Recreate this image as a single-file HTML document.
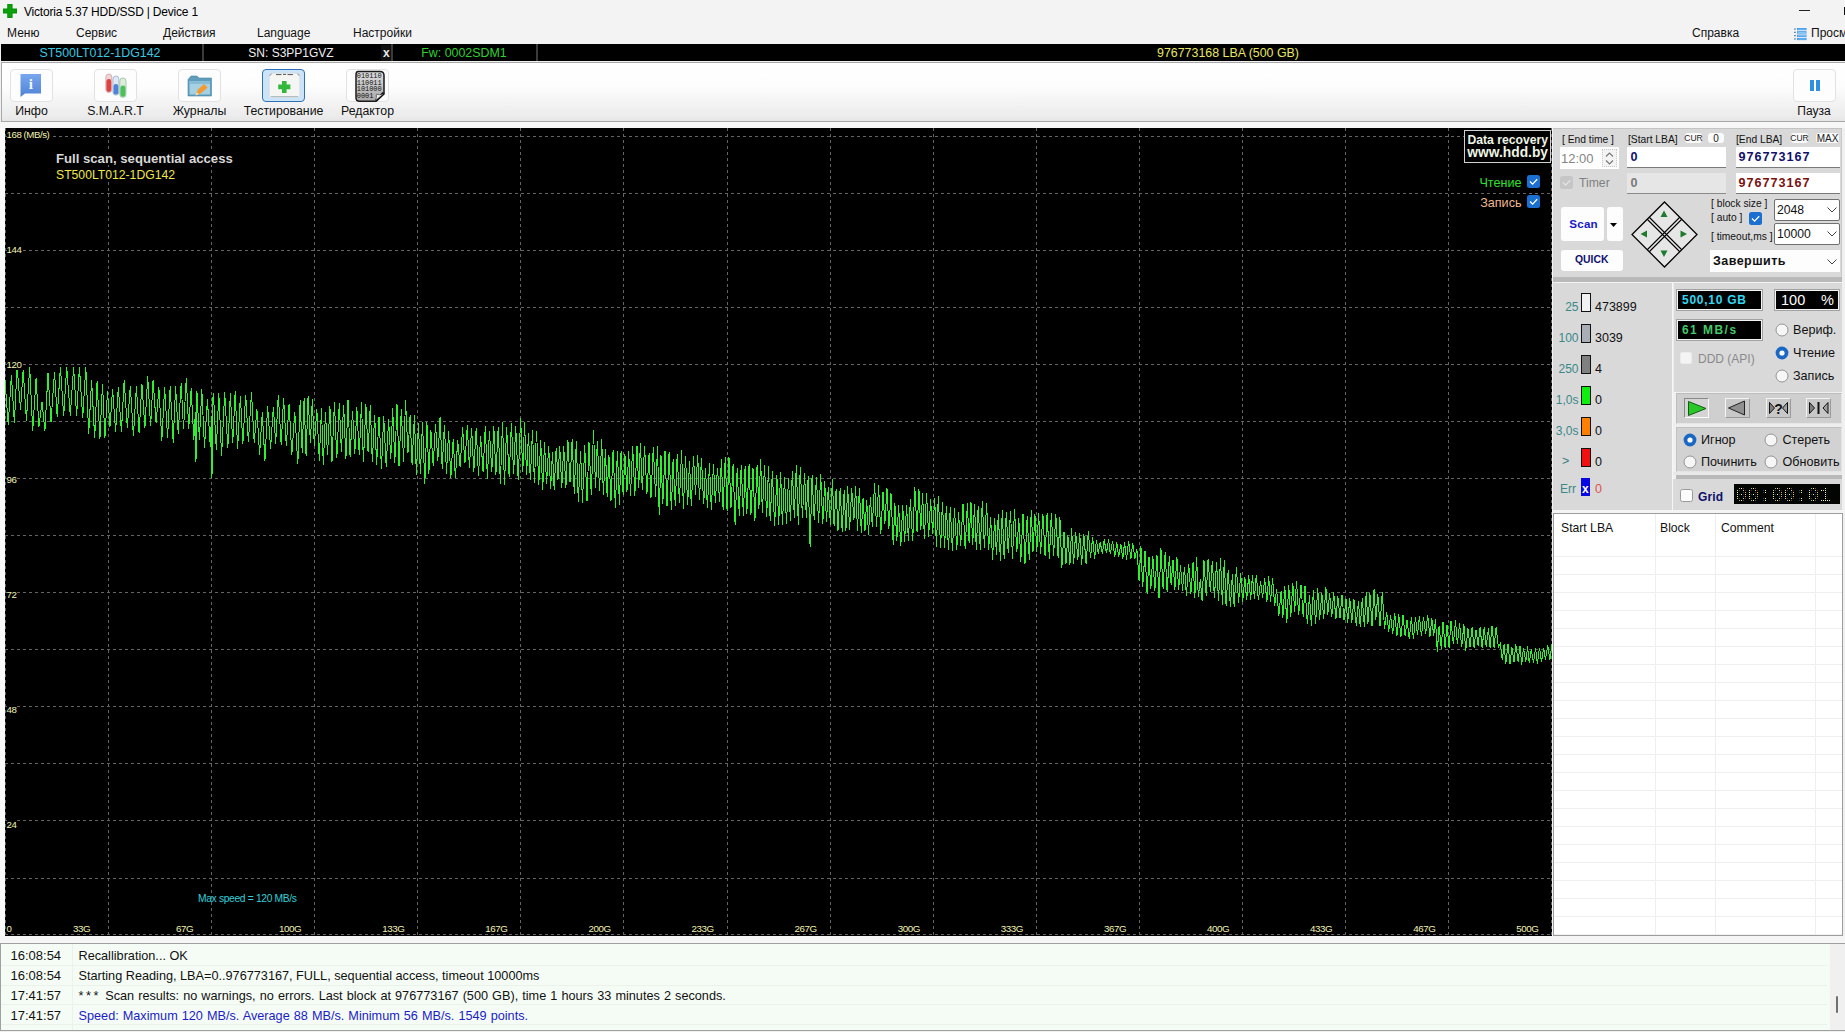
<!DOCTYPE html><html><head><meta charset="utf-8"><title>Victoria 5.37 HDD/SSD | Device 1</title><style>
*{box-sizing:border-box;margin:0;padding:0}
html,body{width:1845px;height:1032px;overflow:hidden;background:#f0f0f0}
body{position:relative;font-family:"Liberation Sans","DejaVu Sans",sans-serif;font-size:12px;color:#000}
.a{position:absolute;white-space:nowrap}
.t{position:absolute;white-space:nowrap;line-height:1}
.b{font-weight:bold}
</style></head><body>
<div class="a" style="left:0px;top:0px;width:1845px;height:22px;background:#f3f3f3"></div>
<svg class="a" style="left:3px;top:4px" width="14" height="14" viewBox="0 0 14 14"><path d="M4.2 0h5.4v4.6h4.4v5h-4.4v4.4h-5.4v-4.4h-4.2v-5h4.2z" fill="#0b940b"/><path d="M5.5 1.5h2.8v4.4h4.2v2h-4.2v4.6h-2.8v-4.6h-4v-2h4z" fill="#0aa40a"/></svg>
<div class="t" style="left:24px;top:6px;font-size:12px;color:#000;letter-spacing:-0.2px">Victoria 5.37 HDD/SSD | Device 1</div>
<div class="a" style="left:1799px;top:10px;width:10.5px;height:1px;background:#222"></div>
<div class="a" style="left:1843.5px;top:6.5px;width:2px;height:8.5px;background:#111"></div>
<div class="a" style="left:0px;top:22px;width:1845px;height:22px;background:#f3f3f3"></div>
<div class="t" style="left:7px;top:26.6px;font-size:12px;color:#111;">Меню</div>
<div class="t" style="left:76px;top:26.6px;font-size:12px;color:#111;">Сервис</div>
<div class="t" style="left:163px;top:26.6px;font-size:12px;color:#111;">Действия</div>
<div class="t" style="left:257px;top:26.6px;font-size:12px;color:#111;">Language</div>
<div class="t" style="left:353px;top:26.6px;font-size:12px;color:#111;">Настройки</div>
<div class="t" style="left:1692px;top:26.6px;font-size:12px;color:#111;">Справка</div>
<div class="t" style="left:1811px;top:26.6px;font-size:12px;color:#111;">Просм</div>
<svg class="a" style="left:1794px;top:27px" width="13" height="14" viewBox="0 0 13 14"><g fill="#2f8ee6"><rect x="3" y="1" width="9.5" height="2.2"/><rect x="3" y="4.3" width="9.5" height="2.2"/><rect x="3" y="7.6" width="9.5" height="2.2"/><rect x="3" y="10.9" width="9.5" height="2.2"/></g><g fill="#9ad4ff"><rect x="3.6" y="1.7" width="8.3" height="0.8"/><rect x="3.6" y="5" width="8.3" height="0.8"/><rect x="3.6" y="8.3" width="8.3" height="0.8"/><rect x="3.6" y="11.6" width="8.3" height="0.8"/></g><g fill="#2a5a9a"><rect x="0.3" y="1.4" width="1.3" height="1.3"/><rect x="0.3" y="4.7" width="1.3" height="1.3"/><rect x="0.3" y="8" width="1.3" height="1.3"/><rect x="0.3" y="11.3" width="1.3" height="1.3"/></g></svg>
<div class="a" style="left:1px;top:44px;width:1844px;height:17px;background:#000"></div>
<div class="a" style="left:202px;top:44px;width:2px;height:17px;background:#3a3a3a"></div>
<div class="a" style="left:391px;top:44px;width:2px;height:17px;background:#3a3a3a"></div>
<div class="a" style="left:536px;top:44px;width:2px;height:17px;background:#3a3a3a"></div>
<div class="a" style="left:381px;top:45px;width:10px;height:16px;background:#101010"></div>
<div class="t" style="left:-50px;width:300px;text-align:center;top:47px;font-size:12.4px;color:#38c8e0;">ST500LT012-1DG142</div>
<div class="t" style="left:141px;width:300px;text-align:center;top:47px;font-size:12px;color:#f0f0f0;">SN: S3PP1GVZ</div>
<div class="t b" style="left:383px;top:47px;font-size:12px;color:#e8e8e8;">x</div>
<div class="t" style="left:314px;width:300px;text-align:center;top:47px;font-size:12.4px;color:#30d030;">Fw: 0002SDM1</div>
<div class="t" style="left:1078px;width:300px;text-align:center;top:47px;font-size:12.4px;color:#e8e860;">976773168 LBA (500 GB)</div>
<div class="a" style="left:1px;top:62px;width:1844px;height:60px;background:linear-gradient(#ffffff,#fdfdfd 40%,#ececec 90%,#e6e6e6);border:1px solid #a8a8a8;border-right:none"></div>
<div class="a" style="left:0px;top:122px;width:1845px;height:6px;background:#f7f7f7"></div>
<div class="a" style="left:0px;top:128px;width:5px;height:808px;background:#fafafa"></div>
<div class="a" style="left:10px;top:69px;width:43px;height:33px;background:#fdfdfd;border:1px solid #e2e2e2;border-radius:4px"></div>
<div class="t" style="left:-118.5px;width:300px;text-align:center;top:105px;font-size:12.3px;color:#111;">Инфо</div>
<div class="a" style="left:94px;top:69px;width:43px;height:33px;background:#fdfdfd;border:1px solid #e2e2e2;border-radius:4px"></div>
<div class="t" style="left:-34.5px;width:300px;text-align:center;top:105px;font-size:12.3px;color:#111;">S.M.A.R.T</div>
<div class="a" style="left:178px;top:69px;width:43px;height:33px;background:#fdfdfd;border:1px solid #e2e2e2;border-radius:4px"></div>
<div class="t" style="left:49.5px;width:300px;text-align:center;top:105px;font-size:12.3px;color:#111;">Журналы</div>
<div class="a" style="left:262px;top:69px;width:43px;height:33px;background:#cce4f7;border:1px solid #2f70b4;border-radius:4px"></div>
<div class="t" style="left:133.5px;width:300px;text-align:center;top:105px;font-size:12.3px;color:#111;">Тестирование</div>
<div class="a" style="left:346px;top:69px;width:43px;height:33px;background:#fdfdfd;border:1px solid #e2e2e2;border-radius:4px"></div>
<div class="t" style="left:217.5px;width:300px;text-align:center;top:105px;font-size:12.3px;color:#111;">Редактор</div>
<svg class="a" style="left:20px;top:73px" width="22" height="25" viewBox="0 0 22 25"><defs><linearGradient id="gi" x1="0" y1="0" x2="0" y2="1"><stop offset="0" stop-color="#78a6ee"/><stop offset="1" stop-color="#4f82d6"/></linearGradient></defs><path d="M0.5 1h20.5v19.5h-16l-4.5 3.5z" fill="url(#gi)"/><text x="10.8" y="16" font-family="Liberation Serif,serif" font-weight="bold" font-size="15" text-anchor="middle" fill="#f4f8ff">i</text></svg>
<svg class="a" style="left:104px;top:73px" width="24" height="26" viewBox="0 0 24 26"><rect x="1.8" y="1" width="6" height="18.6" rx="3" fill="#f2d4d4" stroke="#c09090" stroke-width="0.6"/><rect x="2.4" y="6" width="4.8" height="13" rx="2.4" fill="#dc4444"/><rect x="8.9" y="3" width="6" height="19.2" rx="3" fill="#dde8f8" stroke="#8898b8" stroke-width="0.6"/><rect x="9.5" y="11" width="4.8" height="10.6" rx="2.4" fill="#4c84dc"/><rect x="15.8" y="5" width="6.2" height="19.4" rx="3" fill="#d8f0d8" stroke="#88a888" stroke-width="0.6"/><rect x="16.4" y="12.5" width="5" height="11.3" rx="2.4" fill="#4cc05a"/></svg>
<svg class="a" style="left:187px;top:75px" width="26" height="22" viewBox="0 0 26 22"><path d="M1 4.5l3-3.5h6l2 2h12.5v18h-23.5z" fill="#5f9dbb" stroke="#4a86a6" stroke-width="0.6"/><rect x="2.5" y="6" width="20.5" height="13.5" fill="#a6d0e4"/><rect x="2.5" y="6" width="20.5" height="3" fill="#86bcd6"/><path d="M8.5 20.5l2.5-6 6-5.5 3.6 3.4-6.3 5.6z" fill="#f49a30"/><path d="M8.5 20.5l1.3-3.2 2 2z" fill="#fbe4b8"/></svg>
<svg class="a" style="left:268px;top:71px" width="33" height="28" viewBox="0 0 33 28"><rect x="1.2" y="2.2" width="30.6" height="24.2" rx="2.5" fill="#f5f5f3" stroke="#d4dce4" stroke-width="0.8"/><path d="M8 3.6h5.5M15 3.4h3M19.5 3.6h5.5" stroke="#555" stroke-width="1"/><path d="M1.6 4.8l2-2.2M31.4 4.8l-2-2.2" stroke="#667" stroke-width="0.8"/><path d="M14 10h4.6v3.6h3.8v4.6h-3.8v3.8h-4.6v-3.8h-3.8v-4.6h3.8z" fill="#34b83c"/><path d="M3 25.6h27" stroke="#9aa" stroke-width="0.8"/></svg>
<svg class="a" style="left:354px;top:70px" width="32" height="33" viewBox="0 0 32 33"><defs><linearGradient id="ge" x1="0" y1="0" x2="0" y2="1"><stop offset="0" stop-color="#dedede"/><stop offset="1" stop-color="#a8a8a8"/></linearGradient></defs><path d="M4 1.5h22q4 0 4 4v18.5l-8 7.2h-16.5q-3.5 0-3.500 -3.500v-22.700q0 -3.500 2 -3.500z" fill="url(#ge)" stroke="#1a1a1a" stroke-width="1.5"/><path d="M29.6 23l-7.600 7.600" stroke="#111" stroke-width="2.6"/><path d="M21.500 30.500q1.500 -3 0.800 -6.200q3.500 1 7 -0.300z" fill="#efefef" stroke="#333" stroke-width="0.6"/><g font-family="Liberation Mono,monospace" font-size="6.900" fill="#111"><text x="2.800" y="8.200">010110</text><text x="2.800" y="14.800">110011</text><text x="2.800" y="21.200">101000</text><text x="2.800" y="27.500">0001</text></g></svg>
<div class="a" style="left:1793px;top:69px;width:43px;height:33px;background:#fdfdfd;border:1px solid #e2e2e2;border-radius:4px"></div>
<div class="a" style="left:1810px;top:80px;width:4px;height:11px;background:#2f8fe0"></div>
<div class="a" style="left:1816px;top:80px;width:4px;height:11px;background:#2f8fe0"></div>
<div class="t" style="left:1664px;width:300px;text-align:center;top:105px;font-size:12px;color:#111;">Пауза</div>
<svg class="a" style="left:5px;top:128px" width="1547" height="808" viewBox="5 128 1547 808"><rect x="5" y="128" width="1547" height="808" fill="#000"/><g stroke="#646464" stroke-width="1" stroke-dasharray="3 3" shape-rendering="crispEdges"><path d="M5.5 128V936"/><path d="M108.5 128V936"/><path d="M211.5 128V936"/><path d="M314.5 128V936"/><path d="M417.5 128V936"/><path d="M520.5 128V936"/><path d="M623.5 128V936"/><path d="M727.5 128V936"/><path d="M830.5 128V936"/><path d="M933.5 128V936"/><path d="M1036.5 128V936"/><path d="M1139.5 128V936"/><path d="M1242.5 128V936"/><path d="M1345.5 128V936"/><path d="M1448.5 128V936"/><path d="M1551.5 128V936"/><path d="M5 136.5H1552"/><path d="M5 193.5H1552"/><path d="M5 250.5H1552"/><path d="M5 307.5H1552"/><path d="M5 364.5H1552"/><path d="M5 421.5H1552"/><path d="M5 478.5H1552"/><path d="M5 535.5H1552"/><path d="M5 592.5H1552"/><path d="M5 649.5H1552"/><path d="M5 706.5H1552"/><path d="M5 763.5H1552"/><path d="M5 820.5H1552"/><path d="M5 878.5H1552"/><path d="M5 934.5H1552"/></g><polyline fill="none" stroke="#2ff02f" stroke-width="1" shape-rendering="crispEdges" points="5.0,380.2 8.2,424.7 11.4,375.4 14.4,422.8 17.1,367.0 20.5,409.5 23.2,369.6 26.4,420.5 29.7,367.0 32.7,430.8 36.1,378.1 38.9,426.8 42.0,402.0 44.9,430.7 48.0,373.2 51.0,422.1 54.5,371.7 57.2,416.9 60.4,367.0 63.7,415.6 66.7,367.0 70.3,415.7 73.6,367.0 76.6,415.6 79.4,367.0 82.7,417.8 85.8,367.0 88.7,434.3 91.6,379.9 94.7,438.2 97.1,381.4 99.9,439.1 102.5,383.6 104.9,438.2 107.5,391.3 110.0,426.8 112.6,389.0 115.6,431.6 118.3,386.9 121.4,431.9 124.2,380.2 127.3,427.9 130.3,385.6 133.4,435.8 136.4,386.4 139.1,433.2 141.9,383.6 144.9,428.1 147.7,376.3 150.6,426.4 153.1,379.6 156.1,423.3 158.9,387.5 161.8,440.7 164.6,387.4 167.6,437.5 170.2,386.0 173.2,442.7 175.6,386.1 178.2,433.8 181.2,383.0 183.5,429.3 186.3,377.8 188.7,428.7 191.2,388.3 193.8,439.9 195.4,412.4 196,462 196.6,398.0 196.9,391.1 199.4,439.5 201.8,389.4 204.5,447.6 207.4,399.5 210.3,446.5 211.4,416.1 212,478 212.6,401.4 213.4,393.0 216.3,449.9 218.8,393.3 221.6,455.6 224.7,392.4 227.8,448.4 230.4,393.2 232.7,443.2 235.2,391.3 237.6,448.6 240.4,395.8 242.8,444.2 245.7,394.9 248.4,442.4 251.5,392.1 254.2,442.9 256.9,408.8 259.6,454.9 262.3,412.2 264.9,461.3 267.6,406.4 270.6,448.7 273.4,406.7 275.7,443.5 278.3,394.8 281.2,444.7 283.6,398.0 286.3,445.7 289.1,403.7 291.8,454.6 294.8,412.1 297.8,464.3 300.2,400.5 302.2,452.6 304.1,398.2 306.1,456.4 308.1,395.7 310.4,443.1 312.3,399.0 314.3,446.4 316.8,409.1 319.3,460.5 321.5,408.1 323.3,465.3 325.5,411.9 327.5,455.4 329.9,405.8 332.0,462.1 334.4,402.0 336.8,458.4 339.3,403.0 341.4,452.4 343.6,404.7 345.9,459.4 348.0,400.0 350.1,457.2 352.5,410.6 354.8,453.6 356.8,407.3 359.3,455.1 361.5,402.5 363.4,461.8 365.9,404.5 368.1,452.4 370.3,405.0 372.3,462.2 374.7,415.1 376.6,464.8 379.0,416.6 381.5,468.9 383.7,416.1 386.2,466.8 388.6,419.3 390.8,459.0 392.7,408.4 394.8,462.6 397.0,404.2 399.0,466.4 401.3,409.3 403.6,461.6 405.5,399.7 408.0,452.5 410.1,415.4 412.1,465.1 414.4,415.3 416.4,475.4 418.4,423.3 420.4,473.7 422.5,422.3 424.8,484.3 426.9,421.9 428.8,474.0 430.9,430.4 433.2,466.3 435.5,423.9 437.8,460.9 440.1,416.9 442.2,468.7 444.4,424.8 446.5,473.7 448.6,431.0 450.8,478.3 453.2,439.1 455.4,478.0 457.7,440.5 460.1,467.1 462.6,427.4 464.9,463.4 467.3,425.5 469.4,468.1 471.6,427.6 473.8,471.5 476.2,427.9 478.5,475.9 480.6,436.3 483.1,472.0 485.3,426.4 487.4,478.5 489.4,430.6 491.8,471.7 493.8,426.0 495.9,474.7 498.2,427.5 500.4,483.9 502.5,422.0 504.5,485.3 506.6,426.9 509.2,477.3 511.4,422.6 513.6,474.2 515.7,426.4 518.2,479.8 520.6,418.1 522.8,472.1 524.5,422.5 526.6,475.0 528.5,432.6 530.3,480.3 532.5,430.3 534.4,483.0 536.5,430.7 538.8,484.6 540.7,440.0 542.7,490.2 544.5,442.4 546.6,484.1 548.7,445.9 550.6,488.7 552.5,452.2 554.2,490.0 556.2,447.8 558.0,479.6 559.7,445.6 561.8,487.5 563.7,445.9 565.9,488.0 567.9,440.0 570.0,482.2 572.2,438.8 574.3,494.0 576.3,440.9 578.3,502.4 580.6,451.3 582.5,502.9 584.7,444.9 587.0,501.3 589.0,442.3 591.3,495.4 593.5,430.2 595.6,488.3 597.3,440.6 599.6,490.7 601.7,439.0 603.4,494.9 605.4,449.1 607.2,497.2 608.9,454.8 611.0,500.6 613.1,450.3 615.4,507.8 617.4,450.6 619.4,504.6 621.1,450.6 623.2,495.4 624.9,453.9 626.9,492.2 628.7,451.3 630.5,495.7 632.7,445.9 634.8,496.3 637.0,445.7 638.7,488.4 640.4,442.8 642.3,489.6 644.6,446.4 646.9,493.7 649.1,453.3 651.0,497.7 653.3,446.9 655.6,496.8 657.5,445.7 659.2,514.8 661.0,455.4 662.8,504.1 665.0,450.8 667.0,506.2 669.1,451.8 671.4,510.4 673.1,459.4 675.3,506.0 677.2,454.0 679.4,503.0 681.6,450.1 683.4,508.6 685.5,456.1 687.7,505.1 689.5,461.1 691.3,506.0 693.5,455.6 695.5,495.0 697.7,454.8 699.5,500.4 701.4,458.1 703.7,504.4 705.5,468.1 707.4,508.1 709.5,463.3 711.3,509.8 713.5,463.7 715.3,502.7 717.5,467.7 719.6,502.4 721.4,459.4 723.1,509.5 725.3,456.7 727.1,511.3 729.0,457.3 731.0,507.6 733.1,464.0 735.1,524.9 737.2,468.4 739.3,515.6 741.2,465.0 743.4,516.2 745.1,466.4 746.8,513.9 749.1,463.9 750.9,515.4 753.0,468.5 754.9,521.1 757.1,465.3 758.9,508.6 760.6,458.7 762.4,513.2 764.5,465.0 766.7,517.0 768.5,465.8 770.2,521.3 772.4,470.8 774.6,526.4 776.9,475.3 778.7,524.8 780.6,471.7 782.4,525.3 784.5,476.9 786.5,524.3 788.5,478.1 790.4,520.5 792.4,470.7 794.3,517.5 796.3,465.2 798.3,525.0 800.3,466.7 802.4,518.1 804.6,472.9 806.3,517.9 808.2,476.1 810.1,547.2 812.1,474.9 814.2,520.2 816.4,477.0 818.6,522.8 820.7,474.1 822.8,524.3 824.7,481.1 826.5,521.9 828.3,486.8 830.4,524.5 832.4,478.9 834.1,526.0 836.1,489.3 838.0,530.7 840.2,487.9 842.2,531.6 844.2,490.2 845.9,530.7 847.7,486.4 849.6,530.3 851.7,488.0 853.9,520.2 855.6,486.2 857.5,531.0 859.4,487.8 861.3,533.2 863.1,497.6 865.0,530.6 866.7,499.8 868.5,534.8 870.4,497.1 872.3,526.8 874.6,483.0 876.5,527.0 878.6,485.4 880.8,534.2 883.0,492.1 884.8,524.2 887.0,488.4 888.8,528.9 891.0,493.5 893.2,544.5 894.9,503.4 896.8,541.1 898.6,505.0 900.8,546.3 902.7,505.3 904.6,541.9 906.6,505.5 908.4,540.9 910.4,499.5 912.7,541.4 914.8,487.0 917.1,532.2 918.9,488.6 920.8,530.2 922.6,492.8 924.4,538.9 926.5,492.9 928.7,536.8 930.6,499.1 932.7,533.7 934.7,497.8 936.4,546.8 938.3,496.4 940.6,548.4 942.4,502.4 944.6,547.8 946.3,506.0 948.5,550.3 950.3,506.6 952.4,551.0 954.5,508.4 956.8,549.7 958.5,511.8 960.7,546.0 963.0,504.2 965.2,549.4 967.4,503.4 969.1,543.4 971.0,502.2 972.7,545.2 974.5,504.3 976.3,549.7 978.2,506.2 980.3,549.5 982.3,500.6 984.4,547.7 986.6,503.0 988.6,550.3 990.7,517.0 992.5,559.5 994.7,518.1 996.4,555.3 998.3,513.8 1000.4,560.5 1002.3,510.5 1004.2,559.2 1006.3,512.0 1008.2,552.7 1010.5,511.4 1012.5,558.7 1014.5,508.8 1016.8,552.4 1018.8,518.3 1020.8,561.5 1023.0,514.1 1025.0,563.8 1027.2,516.0 1029.3,559.8 1031.3,509.6 1033.0,551.6 1034.9,514.0 1036.8,552.0 1038.6,512.8 1040.6,553.8 1042.9,513.6 1045.1,556.4 1047.1,513.2 1049.4,559.4 1051.3,513.5 1053.6,556.3 1055.8,514.5 1058.1,558.0 1059.9,517.5 1061.8,568.3 1064.0,531.6 1066.0,563.5 1067.9,534.9 1069.9,565.2 1071.6,528.0 1073.6,564.0 1075.7,532.0 1077.8,559.8 1079.7,532.9 1081.6,564.5 1083.9,534.3 1086.1,564.4 1088.3,531.5 1090.5,557.5 1092.7,537.2 1094.6,558.9 1096.4,539.9 1098.3,553.6 1100.2,541.9 1102.4,554.3 1104.2,539.3 1106.4,553.4 1108.6,539.4 1110.3,554.1 1112.6,540.8 1114.8,556.8 1116.8,542.2 1118.7,557.4 1120.8,543.6 1122.8,558.9 1124.6,542.1 1126.5,560.1 1128.6,541.1 1130.9,558.6 1132.7,543.1 1134.9,558.5 1136.9,549.1 1139.1,580.8 1140.9,545.6 1142.7,587.3 1145.0,551.0 1147.1,593.7 1149.0,556.6 1150.8,589.4 1152.8,555.6 1154.8,591.1 1157.0,555.2 1159.0,598.4 1160.9,548.5 1163.1,588.5 1165.2,551.9 1167.1,591.8 1169.4,556.0 1171.1,584.6 1173.0,559.7 1174.8,589.9 1176.9,556.8 1178.6,590.1 1180.5,565.4 1182.5,590.7 1184.5,566.6 1186.4,596.0 1188.7,563.9 1190.9,594.2 1193.1,562.0 1194.8,598.2 1196.6,557.4 1198.3,597.3 1200.3,579.4 1202.1,600.8 1204.0,560.4 1206.2,595.6 1208.1,558.7 1210.3,591.8 1212.3,560.8 1214.4,597.5 1216.6,562.0 1218.5,601.0 1220.5,558.4 1222.4,604.8 1224.3,559.9 1226.1,606.3 1228.2,569.6 1230.4,607.2 1232.4,573.6 1234.2,607.3 1236.4,566.9 1238.6,602.6 1240.7,573.3 1242.6,602.3 1244.9,577.3 1246.6,600.4 1248.7,575.3 1250.7,600.0 1252.4,575.3 1254.4,598.7 1256.3,574.6 1258.4,600.2 1260.6,581.1 1262.6,598.1 1264.7,578.5 1266.9,601.9 1268.7,576.4 1270.5,601.5 1272.6,578.2 1274.7,605.5 1276.6,588.8 1278.8,616.3 1281.1,591.4 1282.9,617.5 1284.8,586.2 1286.8,622.8 1288.7,585.3 1290.8,616.7 1292.8,582.6 1294.7,611.8 1296.5,581.1 1298.7,615.4 1301.0,585.0 1303.2,616.6 1305.0,586.1 1307.3,624.2 1309.5,595.4 1311.4,626.2 1313.4,590.3 1315.6,623.7 1317.7,588.2 1319.6,619.8 1321.9,592.9 1323.6,619.3 1325.9,587.5 1327.8,614.7 1329.6,593.4 1331.8,617.0 1333.7,592.1 1335.9,619.3 1337.8,595.9 1340.0,617.7 1342.0,594.6 1344.0,619.8 1346.0,599.0 1347.7,622.7 1349.8,598.5 1351.8,622.5 1353.9,598.9 1356.2,625.5 1358.5,601.2 1360.2,626.6 1362.3,598.4 1364.4,626.8 1366.2,592.1 1367.9,623.6 1369.9,593.3 1372.0,626.1 1374.1,588.9 1375.8,620.1 1377.8,594.5 1380.0,626.4 1382.3,592.1 1384.5,628.6 1386.7,611.8 1388.7,632.4 1390.6,614.7 1392.7,633.9 1394.7,613.1 1396.9,635.9 1398.8,614.4 1400.9,637.3 1403.0,615.4 1405.2,636.4 1407.0,619.7 1409.3,639.3 1411.4,617.0 1413.4,639.1 1415.5,617.1 1417.5,635.3 1419.4,615.9 1421.4,636.2 1423.5,616.9 1425.7,634.0 1427.7,615.0 1429.9,637.1 1431.8,617.6 1433.7,636.3 1435.5,619.3 1437.3,651.9 1439.1,625.8 1441.3,648.5 1443.0,621.6 1445.1,647.9 1447.0,624.6 1449.1,647.9 1451.0,620.6 1453.3,644.3 1455.5,620.5 1457.4,644.2 1459.6,623.5 1461.7,647.4 1463.9,624.2 1465.7,651.2 1467.9,628.4 1470.0,647.3 1472.1,627.0 1474.1,648.0 1476.0,629.6 1478.1,645.5 1480.1,627.4 1482.2,648.3 1484.2,626.8 1486.2,647.0 1488.4,628.4 1490.1,647.5 1492.0,625.7 1494.1,647.9 1496.1,626.6 1498.3,647.0 1500.3,643.2 1502.3,659.9 1504.1,643.9 1505.8,664.2 1508.0,644.2 1510.0,664.4 1511.9,646.9 1514.0,662.0 1515.8,644.3 1518.1,661.7 1520.0,646.1 1521.7,665.1 1523.5,647.8 1525.8,662.2 1527.6,646.5 1529.3,663.4 1531.2,649.1 1533.5,662.6 1535.6,647.9 1537.4,664.0 1539.5,647.6 1541.5,662.1 1543.6,647.6 1545.5,659.5 1547.7,645.1 1549.9,659.7 1552.0,643.8"/></svg>
<div class="t" style="left:6.5px;top:129.7px;font-size:9.7px;color:#f2f2b4;letter-spacing:-0.45px;background:#000;padding-right:1px">168 (MB/s)</div>
<div class="t" style="left:6.5px;top:244.7px;font-size:9.7px;color:#f2f2b4;letter-spacing:-0.45px;background:#000;padding-right:1px">144</div>
<div class="t" style="left:6.5px;top:359.8px;font-size:9.7px;color:#f2f2b4;letter-spacing:-0.45px;background:#000;padding-right:1px">120</div>
<div class="t" style="left:6.5px;top:474.9px;font-size:9.7px;color:#f2f2b4;letter-spacing:-0.45px;background:#000;padding-right:1px">96</div>
<div class="t" style="left:6.5px;top:590.0px;font-size:9.7px;color:#f2f2b4;letter-spacing:-0.45px;background:#000;padding-right:1px">72</div>
<div class="t" style="left:6.5px;top:705.0px;font-size:9.7px;color:#f2f2b4;letter-spacing:-0.45px;background:#000;padding-right:1px">48</div>
<div class="t" style="left:6.5px;top:820.1px;font-size:9.7px;color:#f2f2b4;letter-spacing:-0.45px;background:#000;padding-right:1px">24</div>
<div class="t" style="left:72.9px;top:923.6px;font-size:9.8px;color:#f2f2b4;letter-spacing:-0.45px;background:#000">33G</div>
<div class="t" style="left:176.0px;top:923.6px;font-size:9.8px;color:#f2f2b4;letter-spacing:-0.45px;background:#000">67G</div>
<div class="t" style="left:279.1px;top:923.6px;font-size:9.8px;color:#f2f2b4;letter-spacing:-0.45px;background:#000">100G</div>
<div class="t" style="left:382.2px;top:923.6px;font-size:9.8px;color:#f2f2b4;letter-spacing:-0.45px;background:#000">133G</div>
<div class="t" style="left:485.3px;top:923.6px;font-size:9.8px;color:#f2f2b4;letter-spacing:-0.45px;background:#000">167G</div>
<div class="t" style="left:588.4px;top:923.6px;font-size:9.8px;color:#f2f2b4;letter-spacing:-0.45px;background:#000">200G</div>
<div class="t" style="left:691.5px;top:923.6px;font-size:9.8px;color:#f2f2b4;letter-spacing:-0.45px;background:#000">233G</div>
<div class="t" style="left:794.6px;top:923.6px;font-size:9.8px;color:#f2f2b4;letter-spacing:-0.45px;background:#000">267G</div>
<div class="t" style="left:897.7px;top:923.6px;font-size:9.8px;color:#f2f2b4;letter-spacing:-0.45px;background:#000">300G</div>
<div class="t" style="left:1000.8px;top:923.6px;font-size:9.8px;color:#f2f2b4;letter-spacing:-0.45px;background:#000">333G</div>
<div class="t" style="left:1103.9px;top:923.6px;font-size:9.8px;color:#f2f2b4;letter-spacing:-0.45px;background:#000">367G</div>
<div class="t" style="left:1207.0px;top:923.6px;font-size:9.8px;color:#f2f2b4;letter-spacing:-0.45px;background:#000">400G</div>
<div class="t" style="left:1310.1px;top:923.6px;font-size:9.8px;color:#f2f2b4;letter-spacing:-0.45px;background:#000">433G</div>
<div class="t" style="left:1413.2px;top:923.6px;font-size:9.8px;color:#f2f2b4;letter-spacing:-0.45px;background:#000">467G</div>
<div class="t" style="left:1516.3px;top:923.6px;font-size:9.8px;color:#f2f2b4;letter-spacing:-0.45px;background:#000">500G</div>
<div class="t" style="left:6.5px;top:924px;font-size:9.7px;color:#f2f2b4;letter-spacing:-0.45px;background:#000">0</div>
<div class="t b" style="left:56px;top:152px;font-size:13.15px;color:#d8d8d8;background:#000">Full scan, sequential access</div>
<div class="t" style="left:56px;top:169px;font-size:12.2px;color:#f0e848;background:#000">ST500LT012-1DG142</div>
<div class="t" style="left:198px;top:894px;font-size:10.3px;color:#30d0d8;letter-spacing:-0.35px">Max speed = 120 MB/s</div>
<div class="a" style="left:1464px;top:130px;width:87px;height:33px;background:#000;border:1px solid #d0d0d0"></div>
<div class="t b" style="right:297px;top:133.5px;font-size:12.2px;color:#eef4e4">Data recovery</div>
<div class="t b" style="right:297px;top:145.5px;font-size:13.8px;color:#eef4e4">www.hdd.by</div>
<div class="t" style="right:323.5px;top:176.7px;font-size:12.6px;color:#30e030;background:#000">Чтение</div>
<div class="t" style="right:323.5px;top:196.5px;font-size:12.6px;color:#f0b890;background:#000">Запись</div>
<svg class="a" style="left:1527px;top:175px" width="13" height="13" viewBox="0 0 13 13"><rect width="13" height="13" rx="2.5" fill="#1b6fd0"/><path d="M3 6.5l2.6 2.6l4.6-4.8" fill="none" stroke="#fff" stroke-width="1.3"/></svg>
<svg class="a" style="left:1527px;top:195px" width="13" height="13" viewBox="0 0 13 13"><rect width="13" height="13" rx="2.5" fill="#1b6fd0"/><path d="M3 6.5l2.6 2.6l4.6-4.8" fill="none" stroke="#fff" stroke-width="1.3"/></svg>
<div class="a" style="left:1552px;top:128px;width:1px;height:808px;background:#f4f4f4"></div>
<div class="a" style="left:1553px;top:128px;width:289px;height:149px;background:#d9d9d9;border-top:1px solid #c4c4c4;border-right:1px solid #c8c8c8"></div>
<div class="a" style="left:1553px;top:277px;width:289px;height:5px;background:#b9b9b9"></div>
<div class="a" style="left:1553px;top:282px;width:289px;height:1px;background:#f2f2f2"></div>
<div class="t" style="left:1562px;top:134.5px;font-size:10.25px;color:#111;">[ End time ]</div>
<div class="t" style="left:1628px;top:134.5px;font-size:10.25px;color:#111;">[Start LBA]</div>
<div class="t" style="left:1736px;top:134.5px;font-size:10.25px;color:#111;">[End LBA]</div>
<div class="a" style="left:1685px;top:133px;width:17px;height:10px;background:#fafafa;border-radius:3px"></div>
<div class="t" style="left:1543.5px;width:300px;text-align:center;top:134px;font-size:8.5px;color:#222;">CUR</div>
<div class="a" style="left:1708px;top:133px;width:16px;height:10px;background:#fafafa;border-radius:3px"></div>
<div class="t" style="left:1566.0px;width:300px;text-align:center;top:134px;font-size:10px;color:#222;">0</div>
<div class="a" style="left:1791px;top:133px;width:17px;height:10px;background:#fafafa;border-radius:3px"></div>
<div class="t" style="left:1649.5px;width:300px;text-align:center;top:134px;font-size:8.5px;color:#222;">CUR</div>
<div class="a" style="left:1816px;top:133px;width:23px;height:10px;background:#fafafa;border-radius:3px"></div>
<div class="t" style="left:1677.5px;width:300px;text-align:center;top:134px;font-size:10px;color:#222;">MAX</div>
<div class="a" style="left:1560px;top:147px;width:59px;height:22px;background:#fff"></div>
<div class="t" style="left:1561px;top:152px;font-size:13px;color:#858585;">12:00</div>
<div class="a" style="left:1602px;top:149px;width:15px;height:18px;background:#f4f4f4;border:1px dotted #c8c8c8"></div>
<svg class="a" style="left:1605px;top:152px" width="9" height="13" viewBox="0 0 9 13"><path d="M1 4.5L4.5 1L8 4.5M1 8.5L4.5 12L8 8.5" fill="none" stroke="#777" stroke-width="1.1"/></svg>
<div class="a" style="left:1627px;top:147px;width:99px;height:21px;background:#fff;border-bottom:1px solid #7a7a7a"></div>
<div class="t" style="left:1630.5px;top:151px;font-size:12.6px;color:#10106a;font-weight:bold;letter-spacing:1.0px">0</div>
<div class="a" style="left:1736px;top:147px;width:104px;height:21px;background:#fff;border-bottom:1px solid #7a7a7a"></div>
<div class="t" style="left:1738.5px;top:151px;font-size:12.6px;color:#10106a;font-weight:bold;letter-spacing:1.0px">976773167</div>
<div class="a" style="left:1627px;top:173px;width:99px;height:21px;background:#e6e6e6;border-bottom:1px solid #8a8a8a"></div>
<div class="t" style="left:1630.5px;top:177px;font-size:12.6px;color:#7a7a7a;font-weight:bold;letter-spacing:1.0px">0</div>
<div class="a" style="left:1736px;top:173px;width:104px;height:21px;background:#fff;border-bottom:1px solid #7a7a7a"></div>
<div class="t" style="left:1738.5px;top:177px;font-size:12.6px;color:#7a1010;font-weight:bold;letter-spacing:1.0px">976773167</div>
<svg class="a" style="left:1560px;top:176px" width="13" height="13" viewBox="0 0 13 13"><rect width="13" height="13" rx="2.5" fill="#c6c6c6"/><path d="M3 6.5l2.6 2.6l4.6-4.8" fill="none" stroke="#e4e4e4" stroke-width="1.3"/></svg>
<div class="t" style="left:1579px;top:177px;font-size:12.2px;color:#808080;">Timer</div>
<div class="a" style="left:1561px;top:207px;width:43px;height:34px;background:#fdfdfd;border-radius:3px"></div>
<div class="t" style="left:1569.3px;top:218px;font-size:11.6px;color:#1a1ac8;font-weight:bold;letter-spacing:0.2px">Scan</div>
<div class="a" style="left:1607px;top:207px;width:16px;height:34px;background:#fdfdfd;border-radius:3px"></div>
<svg class="a" style="left:1610px;top:223px" width="7" height="4" viewBox="0 0 7 4"><path d="M0 0h7l-3.5 4z" fill="#000"/></svg>
<div class="a" style="left:1561px;top:250px;width:62px;height:21px;background:#fdfdfd;border-radius:3px"></div>
<div class="t" style="left:1441.7px;width:300px;text-align:center;top:254.5px;font-size:10.4px;color:#101070;font-weight:bold">QUICK</div>
<svg class="a" style="left:1630px;top:200px" width="70" height="70" viewBox="1630 200 70 70"><path d="M1664.5 202.0L1697.0 234.5L1664.5 267.0L1632.0 234.5Z" fill="#e6e6e6" stroke="#000" stroke-width="1.25"/><path d="M1647.25 219.25L1679.75 251.75M1649.25 217.25L1681.75 249.75M1681.75 219.25L1649.25 251.75M1679.75 217.25L1647.25 249.75" stroke="#000" stroke-width="1.1" fill="none"/><path d="M1664.0 210.5l3.5 6.5h-7z" fill="#1c7c2c"/><path d="M1664.0 257.0l3.5 -6.5h-7z" fill="#1c7c2c"/><path d="M1640.5 234.0l6.5 -3.5v7z" fill="#1c7c2c"/><path d="M1687.0 234.0l-6.5 -3.5v7z" fill="#1c7c2c"/></svg>
<div class="t" style="left:1711px;top:199px;font-size:10.25px;color:#111;">[ block size ]</div>
<div class="t" style="left:1711px;top:213px;font-size:10.25px;color:#111;">[ auto ]</div>
<div class="t" style="left:1711px;top:232px;font-size:10.25px;color:#111;">[ timeout,ms ]</div>
<svg class="a" style="left:1749px;top:212px" width="13" height="13" viewBox="0 0 13 13"><rect width="13" height="13" rx="2.5" fill="#1b6fd0"/><path d="M3 6.5l2.6 2.6l4.6-4.8" fill="none" stroke="#fff" stroke-width="1.3"/></svg>
<div class="a" style="left:1774px;top:199px;width:66px;height:22px;background:#fff;border:1px solid #707070;border-radius:2px"></div>
<div class="t" style="left:1777px;top:204px;font-size:12.2px;color:#111;">2048</div>
<svg class="a" style="left:1827px;top:207px" width="10" height="6" viewBox="0 0 10 6"><path d="M0.5 0.5L5 5L9.5 0.5" fill="none" stroke="#444" stroke-width="1"/></svg>
<div class="a" style="left:1774px;top:223px;width:66px;height:22px;background:#fff;border:1px solid #707070;border-radius:2px"></div>
<div class="t" style="left:1777px;top:228px;font-size:12.2px;color:#111;">10000</div>
<svg class="a" style="left:1827px;top:231px" width="10" height="6" viewBox="0 0 10 6"><path d="M0.5 0.5L5 5L9.5 0.5" fill="none" stroke="#444" stroke-width="1"/></svg>
<div class="a" style="left:1710px;top:250px;width:130px;height:22px;background:#fdfdfd"></div>
<div class="t" style="left:1713px;top:254.5px;font-size:12.5px;color:#111;font-weight:bold;letter-spacing:0.45px">Завершить</div>
<svg class="a" style="left:1827px;top:259px" width="10" height="6" viewBox="0 0 10 6"><path d="M0.5 0.5L5 5L9.5 0.5" fill="none" stroke="#444" stroke-width="1"/></svg>
<div class="a" style="left:1553px;top:283px;width:119px;height:227px;background:#d9d9d9"></div>
<div class="a" style="left:1672px;top:283px;width:1px;height:227px;background:#f6f6f6"></div>
<div class="a" style="left:1581px;top:293px;width:10px;height:19px;background:#f2f2f2;border:1px solid #111"></div>
<div class="t" style="right:266.5px;top:301px;font-size:12px;color:#3a8888">25</div>
<div class="t" style="left:1595px;top:301px;font-size:12.5px;color:#111;">473899</div>
<div class="a" style="left:1581px;top:324px;width:10px;height:19px;background:#a9adb5;border:1px solid #111"></div>
<div class="t" style="right:266.5px;top:332px;font-size:12px;color:#3a8888">100</div>
<div class="t" style="left:1595px;top:332px;font-size:12.5px;color:#111;">3039</div>
<div class="a" style="left:1581px;top:355px;width:10px;height:19px;background:#808080;border:1px solid #111"></div>
<div class="t" style="right:266.5px;top:363px;font-size:12px;color:#3a8888">250</div>
<div class="t" style="left:1595px;top:363px;font-size:12.5px;color:#111;">4</div>
<div class="a" style="left:1581px;top:386px;width:10px;height:19px;background:#10ee10;border:1px solid #111"></div>
<div class="t" style="right:266.5px;top:394px;font-size:12px;color:#3a8888">1,0s</div>
<div class="t" style="left:1595px;top:394px;font-size:12.5px;color:#111;">0</div>
<div class="a" style="left:1581px;top:417px;width:10px;height:19px;background:#ff8000;border:1px solid #111"></div>
<div class="t" style="right:266.5px;top:425px;font-size:12px;color:#3a8888">3,0s</div>
<div class="t" style="left:1595px;top:425px;font-size:12.5px;color:#111;">0</div>
<div class="a" style="left:1581px;top:448px;width:10px;height:19px;background:#f01010;border:1px solid #111"></div>
<div class="t" style="left:1562px;top:455px;font-size:12.5px;color:#3a8080;">&gt;</div>
<div class="t" style="left:1595px;top:456px;font-size:12.5px;color:#111;">0</div>
<div class="a" style="left:1581px;top:478px;width:9px;height:18px;background:#0808e0"></div>
<div class="t" style="left:1582px;top:483px;font-size:12px;color:#fff;font-weight:bold">x</div>
<div class="t" style="left:1560px;top:483px;font-size:12px;color:#3a8888;">Err</div>
<div class="t" style="left:1595px;top:483px;font-size:12.5px;color:#e05050;">0</div>
<div class="a" style="left:1673px;top:283px;width:169px;height:109px;background:#d9d9d9;border-left:1px solid #ececec"></div>
<div class="a" style="left:1676px;top:289px;width:87px;height:22px;background:#000;border:1px solid #a2a2a2;box-shadow:inset 0 0 0 1px #f4f4f4"></div>
<div class="t" style="left:1682px;top:293.6px;font-size:12px;color:#30d8f0;font-weight:bold;letter-spacing:0.75px">500,10 GB</div>
<div class="a" style="left:1774px;top:289px;width:66px;height:22px;background:#000;border:1px solid #a2a2a2;box-shadow:inset 0 0 0 1px #f4f4f4"></div>
<div class="t" style="left:1781px;top:293px;font-size:14.5px;color:#fff;">100</div>
<div class="t" style="left:1821px;top:293px;font-size:14.5px;color:#fff;">%</div>
<div class="a" style="left:1676px;top:319px;width:87px;height:22px;background:#000;border:1px solid #a2a2a2;box-shadow:inset 0 0 0 1px #f4f4f4"></div>
<div class="t" style="left:1682px;top:323.6px;font-size:12px;color:#44c868;font-weight:bold;letter-spacing:1.45px">61 MB/s</div>
<svg class="a" style="left:1774.5px;top:322.5px" width="14" height="14" viewBox="0 0 14 14"><circle cx="7" cy="7" r="6" fill="#f6f6f6" stroke="#8a8a8a" stroke-width="0.9"/></svg>
<div class="t" style="left:1793px;top:324px;font-size:12.6px;color:#111;">Вериф.</div>
<svg class="a" style="left:1774.5px;top:345.5px" width="14" height="14" viewBox="0 0 14 14"><circle cx="7" cy="7" r="6.4" fill="#1b67c4"/><circle cx="7" cy="7" r="2.6" fill="#fff"/></svg>
<div class="t" style="left:1793px;top:347px;font-size:12.6px;color:#111;">Чтение</div>
<svg class="a" style="left:1774.5px;top:368.5px" width="14" height="14" viewBox="0 0 14 14"><circle cx="7" cy="7" r="6" fill="#f6f6f6" stroke="#8a8a8a" stroke-width="0.9"/></svg>
<div class="t" style="left:1793px;top:370px;font-size:12.6px;color:#111;">Запись</div>
<div class="a" style="left:1680px;top:352px;width:12px;height:12px;background:#f4f4f4;border:1px solid #ececec;border-radius:2px"></div>
<div class="t" style="left:1698px;top:353px;font-size:12px;color:#8a8a8a;">DDD (API)</div>
<div class="a" style="left:1673px;top:392px;width:169px;height:1px;background:#f0f0f0"></div>
<div class="a" style="left:1676px;top:393px;width:166px;height:31px;background:#cfcfcf;border:1px solid #e6e6e6;border-left-color:#bdbdbd;border-top-color:#bdbdbd"></div>
<div class="a" style="left:1684px;top:398px;width:25px;height:20px;border:1px solid;border-color:#8a8a8a #fbfbfb #fbfbfb #8a8a8a;background:#d4d4d4"></div>
<svg class="a" style="left:1684px;top:398px" width="25" height="20" viewBox="0 0 25 20"><path d="M4.5 3.5L22 10.5L4.5 17.5Z" fill="#28c828" stroke="#145a14" stroke-width="1"/></svg>
<div class="a" style="left:1725px;top:398px;width:25px;height:20px;border:1px solid;border-color:#f4f4f4 #9a9a9a #9a9a9a #f4f4f4;background:#c8c8c8"></div>
<svg class="a" style="left:1725px;top:398px" width="25" height="20" viewBox="0 0 25 20"><path d="M19.5 3L3.5 10L19.5 17Z" fill="#909090" stroke="#222" stroke-width="1"/></svg>
<div class="a" style="left:1766px;top:398px;width:25px;height:20px;border:1px solid;border-color:#f4f4f4 #9a9a9a #9a9a9a #f4f4f4;background:#c8c8c8"></div>
<svg class="a" style="left:1766px;top:398px" width="25" height="20" viewBox="0 0 25 20"><path d="M3.5 4.5L8.5 10L3.5 15.5Z" fill="#808080" stroke="#111" stroke-width="1"/><path d="M21.5 4.5L16.5 10L21.5 15.5Z" fill="#a0a0a0" stroke="#111" stroke-width="1"/><text x="12.5" y="15.5" font-size="14" font-weight="bold" text-anchor="middle" font-family="Liberation Sans,sans-serif" fill="#111">?</text></svg>
<div class="a" style="left:1806px;top:398px;width:25px;height:20px;border:1px solid;border-color:#f4f4f4 #9a9a9a #9a9a9a #f4f4f4;background:#c8c8c8"></div>
<svg class="a" style="left:1806px;top:398px" width="25" height="20" viewBox="0 0 25 20"><path d="M3.5 4.5L8.5 10L3.5 15.5Z" fill="#808080" stroke="#111" stroke-width="1"/><path d="M22 4.5L17 10L22 15.5Z" fill="#a0a0a0" stroke="#111" stroke-width="1"/><rect x="11.5" y="4" width="2" height="12" fill="#111"/></svg>
<div class="a" style="left:1673px;top:424px;width:169px;height:3px;background:#ededed"></div>
<div class="a" style="left:1676px;top:427px;width:166px;height:45px;background:#d2d2d2;border:1px solid #e4e4e4;border-left-color:#c0c0c0;border-top-color:#c0c0c0"></div>
<svg class="a" style="left:1682.5px;top:433px" width="14" height="14" viewBox="0 0 14 14"><circle cx="7" cy="7" r="6.4" fill="#1b67c4"/><circle cx="7" cy="7" r="2.6" fill="#fff"/></svg>
<div class="t" style="left:1701px;top:434px;font-size:12.6px;color:#111;">Игнор</div>
<svg class="a" style="left:1763.5px;top:433px" width="14" height="14" viewBox="0 0 14 14"><circle cx="7" cy="7" r="6" fill="#f6f6f6" stroke="#8a8a8a" stroke-width="0.9"/></svg>
<div class="t" style="left:1782.5px;top:434px;font-size:12.6px;color:#111;">Стереть</div>
<svg class="a" style="left:1682.5px;top:455px" width="14" height="14" viewBox="0 0 14 14"><circle cx="7" cy="7" r="6" fill="#f6f6f6" stroke="#8a8a8a" stroke-width="0.9"/></svg>
<div class="t" style="left:1701px;top:456px;font-size:12.6px;color:#111;">Починить</div>
<svg class="a" style="left:1763.5px;top:455px" width="14" height="14" viewBox="0 0 14 14"><circle cx="7" cy="7" r="6" fill="#f6f6f6" stroke="#8a8a8a" stroke-width="0.9"/></svg>
<div class="t" style="left:1782.5px;top:456px;font-size:12.6px;color:#111;">Обновить</div>
<div class="a" style="left:1673px;top:472px;width:169px;height:3px;background:#e8e8e8"></div>
<div class="a" style="left:1676px;top:475px;width:166px;height:4px;background:#b9b9b9"></div>
<div class="a" style="left:1673px;top:479px;width:169px;height:31px;background:#d9d9d9"></div>
<div class="a" style="left:1680px;top:489px;width:13px;height:13px;background:#fbfbfb;border:1px solid #9a9a9a;border-radius:2.5px"></div>
<div class="t" style="left:1698px;top:490.5px;font-size:12px;color:#10106a;font-weight:bold;letter-spacing:0.1px">Grid</div>
<div class="a" style="left:1734px;top:484px;width:106px;height:20px;background:#030503;overflow:hidden"><div class="t" style="left:1px;top:1.5px;font-size:20px;color:#f2f2c4;font-family:'Liberation Mono','DejaVu Sans Mono',monospace">00:00:01</div><div class="a" style="left:0;top:0;width:106px;height:20px;background:repeating-linear-gradient(90deg,#030503 0 1px,transparent 1px 2px)"></div><div class="a" style="left:0;top:0;width:106px;height:20px;background:repeating-linear-gradient(180deg,transparent 0 1px,#030503 1px 2px)"></div></div>
<div class="a" style="left:1553px;top:510px;width:292px;height:3px;background:#f4f4f4"></div>
<div class="a" style="left:1553px;top:513px;width:290px;height:423px;background:#fff;border:1px solid #9c9c9c"></div>
<svg class="a" style="left:1554px;top:514px" width="288" height="421" viewBox="0 0 288 421" shape-rendering="crispEdges"><g stroke="#efefef" stroke-width="1"><path d="M101.5 0V421"/><path d="M161.5 0V421"/><path d="M261.5 0V421"/><path d="M0 42.5H288"/><path d="M0 60.5H288"/><path d="M0 78.5H288"/><path d="M0 96.5H288"/><path d="M0 114.5H288"/><path d="M0 132.5H288"/><path d="M0 150.5H288"/><path d="M0 168.5H288"/><path d="M0 186.5H288"/><path d="M0 204.5H288"/><path d="M0 222.5H288"/><path d="M0 240.5H288"/><path d="M0 258.5H288"/><path d="M0 276.5H288"/><path d="M0 294.5H288"/><path d="M0 312.5H288"/><path d="M0 330.5H288"/><path d="M0 348.5H288"/><path d="M0 366.5H288"/><path d="M0 384.5H288"/><path d="M0 402.5H288"/><path d="M0 420.5H288"/></g></svg>
<div class="t" style="left:1561px;top:522px;font-size:12.2px;color:#111;">Start LBA</div>
<div class="t" style="left:1660px;top:522px;font-size:12.2px;color:#111;">Block</div>
<div class="t" style="left:1721px;top:522px;font-size:12.2px;color:#111;">Comment</div>
<div class="a" style="left:0px;top:936px;width:1845px;height:7px;background:#f5f5f5"></div>
<div class="a" style="left:0px;top:943px;width:1846px;height:88px;background:#f5fcf5;border:1px solid #a0a0a0"></div>
<svg class="a" style="left:1px;top:944px" width="1827" height="86" viewBox="0 0 1827 86" shape-rendering="crispEdges"><g stroke="#eaf2ea" stroke-width="1"><path d="M0 21.5H1826"/><path d="M0 41.5H1826"/><path d="M0 60.5H1826"/><path d="M0 80.5H1826"/><path d="M71.5 0V86"/></g></svg>
<div class="a" style="left:1830px;top:944px;width:15px;height:86px;background:#f0f0f0"></div>
<div class="a" style="left:1836px;top:996px;width:2px;height:17px;background:#707070;border-radius:1px"></div>
<div class="t" style="left:10.5px;top:949px;font-size:13px;color:#111"><span style="display:inline-block;width:68px">16:08:54</span><span style="font-size:12.7px;color:#111">Recallibration... OK</span></div>
<div class="t" style="left:10.5px;top:969px;font-size:13px;color:#111"><span style="display:inline-block;width:68px">16:08:54</span><span style="font-size:12.7px;color:#111">Starting Reading, LBA=0..976773167, FULL, sequential access, timeout 10000ms</span></div>
<div class="t" style="left:10.5px;top:989px;font-size:13px;color:#111"><span style="display:inline-block;width:68px">17:41:57</span><span style="font-size:12.7px;color:#111"><span style="letter-spacing:2.6px">***</span><span style="word-spacing:0.55px"> Scan results: no warnings, no errors. Last block at 976773167 (500 GB), time 1 hours 33 minutes 2 seconds.</span></span></div>
<div class="t" style="left:10.5px;top:1009px;font-size:13px;color:#111"><span style="display:inline-block;width:68px">17:41:57</span><span style="font-size:12.7px;color:#1c1cc8"><span style="word-spacing:0.5px">Speed: Maximum 120 MB/s. Average 88 MB/s. Minimum 56 MB/s. 1549 points.</span></span></div>
</body></html>
